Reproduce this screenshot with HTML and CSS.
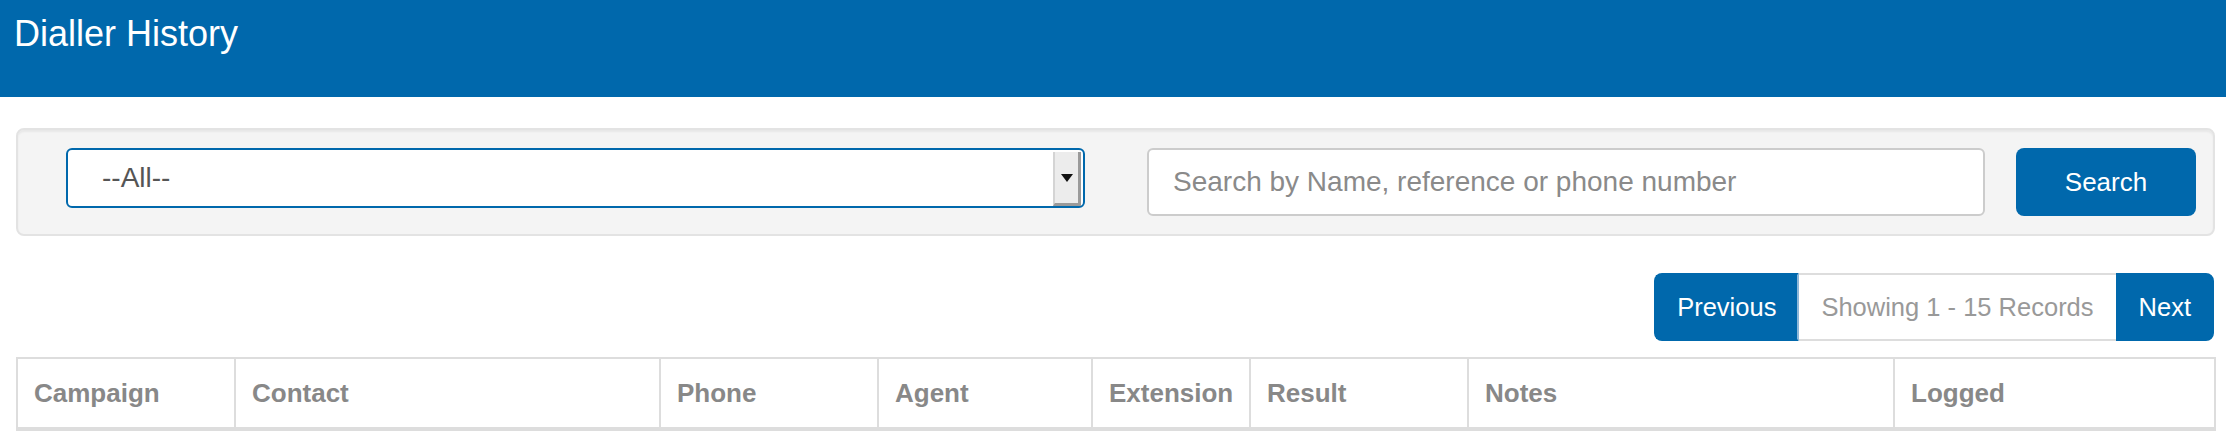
FILE: index.html
```html
<!DOCTYPE html>
<html lang="en">
<head>
<meta charset="utf-8">
<title>Dialler History</title>
<link rel="stylesheet" href="styles.css">
</head>
<body>
<header class="topbar">
  <h1 class="title">Dialler History</h1>
</header>
<main class="content">
  <section class="well">
    <div class="select">
      <span class="select-value">--All--</span>
      <span class="select-arrow"><span class="tri"></span></span>
    </div>
    <input class="search-input" type="text" placeholder="Search by Name, reference or phone number">
    <button class="btn-search" type="button">Search</button>
  </section>
  <nav class="pager">
    <a class="pg pg-prev">Previous</a>
    <span class="pg pg-info">Showing 1 - 15 Records</span>
    <a class="pg pg-next">Next</a>
  </nav>
  <table class="grid">
    <colgroup>
      <col class="c1"><col class="c2"><col class="c3"><col class="c4"><col class="c5"><col class="c6"><col class="c7"><col class="c8">
    </colgroup>
    <thead>
      <tr>
        <th>Campaign</th>
        <th>Contact</th>
        <th>Phone</th>
        <th>Agent</th>
        <th>Extension</th>
        <th>Result</th>
        <th>Notes</th>
        <th>Logged</th>
      </tr>
    </thead>
  </table>
</main>
</body>
</html>
```
FILE: styles.css
```css
* { box-sizing: border-box; }
html, body { margin: 0; padding: 0; background: #fff; }
body {
  font-family: "Liberation Sans", Arial, Helvetica, sans-serif;
  color: #555;
  overflow: hidden;
}
.topbar {
  background: #0068ac;
  height: 97px;
  padding: 14px 0 0 14px;
}
.title {
  margin: 0;
  font-size: 36px;
  line-height: 40px;
  font-weight: normal;
  color: #fff;
}
.content {
  padding: 31px 11px 0 16px;
}
.well {
  display: flex;
  align-items: flex-start;
  background: #f4f4f4;
  border: 2px solid #e3e3e3;
  border-radius: 8px;
  box-shadow: inset 0 2px 2px rgba(0,0,0,0.05);
  padding: 18px 17px 18px 48px;
  height: 108px;
}
.select {
  width: 1019px;
  height: 60px;
  border: 2px solid #0068ac;
  border-radius: 6px;
  background: #fff;
  display: flex;
  align-items: stretch;
  margin-right: 62px;
}
.select-value {
  flex: 1;
  padding-left: 34px;
  font-size: 28px;
  line-height: 56px;
  color: #555;
}
.select-arrow {
  width: 28px;
  margin: 2px 2px 0 0;
  background: #ececec;
  border-left: 2px solid #d4d4d4;
  border-right: 3px solid #9a9a9a;
  border-bottom: 3px solid #9a9a9a;
  display: flex;
  align-items: center;
  justify-content: center;
}
.tri {
  width: 0;
  height: 0;
  border-left: 6px solid transparent;
  border-right: 6px solid transparent;
  border-top: 8px solid #111;
}
.search-input {
  flex: 1;
  height: 68px;
  border: 2px solid #ccc;
  border-radius: 6px;
  background: #fff;
  padding: 0 24px;
  font-family: "Liberation Sans", Arial, Helvetica, sans-serif;
  font-size: 28px;
  color: #555;
  outline: none;
  margin-right: 31px;
}
.search-input::placeholder { color: #8a8a8a; }
.btn-search {
  width: 180px;
  height: 68px;
  border: 0;
  border-radius: 8px;
  background: #0068ac;
  color: #fff;
  font-family: "Liberation Sans", Arial, Helvetica, sans-serif;
  font-size: 26px;
  padding: 0;
}
.pager {
  display: flex;
  justify-content: flex-end;
  margin: 37px 1px 16px 0;
}
.pg {
  display: block;
  height: 68px;
  line-height: 64px;
  font-size: 25.5px;
  padding: 0 21px;
  border: 2px solid #ddd;
}
.pg-prev {
  background: #0068ac;
  color: #fff;
  border-color: #0068ac;
  border-right-color: #8db7d8;
  border-radius: 8px 0 0 8px;
}
.pg-info {
  background: #fff;
  color: #999;
  border-left: 0;
  border-right: 0;
  padding: 0 22px;
}
.pg-next {
  background: #0068ac;
  color: #fff;
  border-color: #0068ac;
  border-radius: 0 8px 8px 0;
}
.grid {
  width: 2198px;
  table-layout: fixed;
  border-collapse: collapse;
}
.c1 { width: 218px; }
.c2 { width: 425px; }
.c3 { width: 218px; }
.c4 { width: 214px; }
.c5 { width: 158px; }
.c6 { width: 218px; }
.c7 { width: 426px; }
.c8 { width: 321px; }
.grid th {
  text-align: left;
  font-size: 26px;
  font-weight: bold;
  color: #888;
  padding: 16px 16px;
  line-height: 36px;
  border: 2px solid #ddd;
  border-bottom: 4px solid #ddd;
  white-space: nowrap;
}
```
